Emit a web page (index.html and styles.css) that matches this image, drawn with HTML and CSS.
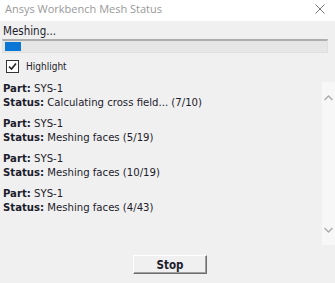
FILE: index.html
```html
<!DOCTYPE html>
<html>
  <head>
    <title>Ansys Workbench Mesh Status</title>
    <link rel="stylesheet" href="styles.css">
  </head>
  <body>
    <div class="titlebar">
      <span class="title">Ansys Workbench Mesh Status</span>
      <svg class="close" width="10" height="10" viewBox="0 0 10 10">
        <path d="M0.5 0.5L9.5 9.5M9.5 0.5L0.5 9.5" stroke="#7a7a7a" stroke-width="1"/>
      </svg>
    </div>
    <div class="content">
      <div class="state">Meshing...</div>
      <div class="progress">
        <div class="progress-fill" style="width: 5%"></div>
      </div>
      <label class="highlight">
        <span class="checkbox">
          <svg width="9" height="9" viewBox="0 0 9 9">
            <path d="M1 4.5L3.5 7L8 1.5" stroke="#222" stroke-width="1.6" fill="none"/>
          </svg>
        </span>
        Highlight
      </label>
      <div class="log">
        <div class="entries">
          <div class="entry">
            <div><b>Part:</b> SYS-1</div>
            <div><b>Status:</b> Calculating cross field... (7/10)</div>
          </div>
          <div class="entry">
            <div><b>Part:</b> SYS-1</div>
            <div><b>Status:</b> Meshing faces (5/19)</div>
          </div>
          <div class="entry">
            <div><b>Part:</b> SYS-1</div>
            <div><b>Status:</b> Meshing faces (10/19)</div>
          </div>
          <div class="entry">
            <div><b>Part:</b> SYS-1</div>
            <div><b>Status:</b> Meshing faces (4/43)</div>
          </div>
        </div>
        <div class="scrollbar">
          <svg width="9" height="6" viewBox="0 0 9 6">
            <path d="M0.5 5L4.5 1L8.5 5" stroke="#a8a8a8" stroke-width="1.3" fill="none"/>
          </svg>
          <svg width="9" height="6" viewBox="0 0 9 6">
            <path d="M0.5 1L4.5 5L8.5 1" stroke="#a8a8a8" stroke-width="1.3" fill="none"/>
          </svg>
        </div>
      </div>
      <div class="actions">
        <button class="stop">Stop</button>
      </div>
    </div>
  </body>
</html>
```

FILE: styles.css
```css
body {
  margin: 0;
  width: 335px;
  height: 283px;
  background: #f0f0f0;
  font-family: "DejaVu Sans", sans-serif;
  font-stretch: condensed;
  font-size: 11.25px;
  color: #1c1c2c;
  overflow: hidden;
}
.titlebar {
  height: 21px;
  background: #fff;
  display: flex;
  align-items: center;
  justify-content: space-between;
  padding: 0 10px 4px 5px;
  box-sizing: border-box;
}
.title {
  font-family: "Open Sans", sans-serif;
  font-stretch: normal;
  font-size: 11px;
  color: #999;
}
.content {
  padding: 0 0 0 2px;
}
.state {
  margin-top: 3px;
  padding-left: 1px;
  font-size: 11.5px;
  line-height: 14px;
}
.progress {
  height: 9px;
  margin: 1px 7px 0 0;
  border: 1px solid #e0e0e0;
  border-top: 2px solid #adadad;
  background: #e6e6e6;
  padding: 1px 2px;
}
.progress-fill {
  height: 100%;
  background: #0a76d6;
}
.highlight {
  display: flex;
  align-items: center;
  gap: 7px;
  margin: 6px 0 0 4px;
  font-size: 10px;
  height: 14px;
}
.checkbox {
  width: 11px;
  height: 11px;
  border: 1px solid #333;
  background: #fff;
  display: flex;
  align-items: center;
  justify-content: center;
}
.log {
  display: flex;
  justify-content: space-between;
  margin-top: 9px;
  height: 163px;
}
.entries {
  padding: 0 0 0 1px;
  line-height: 14px;
}
.entry {
  margin-bottom: 7px;
}
.scrollbar {
  width: 13px;
  background: #f7f7f7;
  display: flex;
  flex-direction: column;
  justify-content: space-between;
  align-items: center;
  padding: 13px 0 12px;
  box-sizing: border-box;
}
.actions {
  display: flex;
  justify-content: center;
  margin-top: 10px;
}
.stop {
  width: 74px;
  height: 19px;
  font-family: "DejaVu Sans", sans-serif;
  font-stretch: condensed;
  font-size: 11.5px;
  font-weight: bold;
  color: #1c1c2c;
  background: #f0f0f0;
  border: 1px solid #fff;
  border-right-color: #6d6d6d;
  border-bottom-color: #6d6d6d;
  box-shadow: inset -1px -1px 0 #a0a0a0;
  padding: 0;
  margin-left: 3px;
}
```
